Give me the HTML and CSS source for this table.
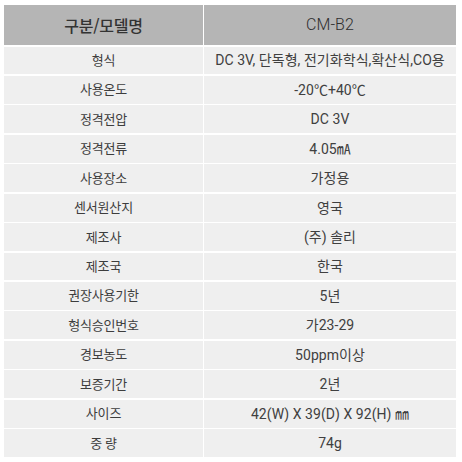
FILE: index.html
```html
<!DOCTYPE html>
<html lang="ko">
<head>
<meta charset="utf-8">
<link rel="stylesheet" href="styles.css">
</head>
<body>
<div class="spec">
  <div class="cell head">구분/모델명</div><div class="cell head val">CM-B2</div>
  <div class="cell">형식</div><div class="cell val">DC 3V, 단독형, 전기화학식,확산식,CO용</div>
  <div class="cell">사용온도</div><div class="cell val">-20℃+40℃</div>
  <div class="cell">정격전압</div><div class="cell val">DC 3V</div>
  <div class="cell">정격전류</div><div class="cell val">4.05㎃</div>
  <div class="cell">사용장소</div><div class="cell val">가정용</div>
  <div class="cell">센서원산지</div><div class="cell val">영국</div>
  <div class="cell">제조사</div><div class="cell val">(주) 솔리</div>
  <div class="cell">제조국</div><div class="cell val">한국</div>
  <div class="cell">권장사용기한</div><div class="cell val">5년</div>
  <div class="cell">형식승인번호</div><div class="cell val">가23-29</div>
  <div class="cell">경보농도</div><div class="cell val">50ppm이상</div>
  <div class="cell">보증기간</div><div class="cell val">2년</div>
  <div class="cell">사이즈</div><div class="cell val">42(W) X 39(D) X 92(H) ㎜</div>
  <div class="cell">중 량</div><div class="cell val">74g</div>
</div>
</body>
</html>
```
FILE: styles.css
```css
html, body {
  margin: 0;
  padding: 0;
  background: #ffffff;
}
body {
  padding: 5px 0 0 4px;
  font-family: Roboto, "Noto Sans CJK KR", sans-serif;
  color: #3d3d3d;
}
.spec {
  display: grid;
  grid-template-columns: 199px 252px;
  grid-template-rows: 40px repeat(14, 1fr);
  column-gap: 1px;
  row-gap: 1.5px;
  width: 452px;
  height: 452px;
  background: #ffffff;
}
.cell {
  background: #efefef;
  display: flex;
  align-items: center;
  justify-content: center;
  font-size: 13px;
  line-height: 1;
  letter-spacing: -0.2px;
}
.val {
  font-size: 14px;
  letter-spacing: 0.05px;
  color: #404040;
}
.head {
  background: #b5b5b5;
  font-size: 16px;
  font-weight: 500;
  color: #333333;
  font-family: "Noto Sans CJK KR", sans-serif;
}
.head.val {
  font-weight: 300;
  font-size: 16px;
  color: #2e2e2e;
  font-family: Roboto, "Noto Sans CJK KR", sans-serif;
}
```
